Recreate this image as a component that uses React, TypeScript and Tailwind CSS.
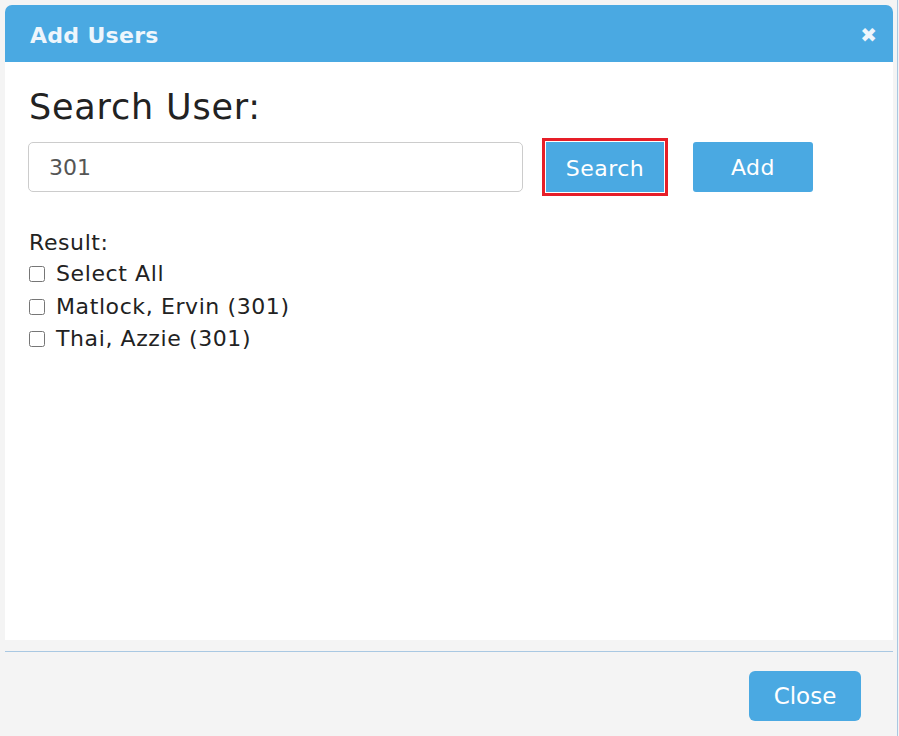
import React, { useState } from 'react';

const users = [
  { id: 'u1', name: 'Matlock, Ervin (301)' },
  { id: 'u2', name: 'Thai, Azzie (301)' },
];

export default function App() {
  const [query, setQuery] = useState('301');
  const [checked, setChecked] = useState<Record<string, boolean>>({});

  const allChecked = users.every((u) => checked[u.id]);

  const toggleAll = () => {
    const next: Record<string, boolean> = {};
    users.forEach((u) => (next[u.id] = !allChecked));
    setChecked(next);
  };

  return (
    <div
      className="w-[899px] h-[736px] bg-[#f4f4f4] flex overflow-hidden"
      style={{ fontFamily: '"DejaVu Sans", Verdana, sans-serif' }}
    >
      <div className="w-[888px] ml-[5px] mt-[5px] flex flex-col">
        {/* header */}
        <div className="h-[57px] bg-[#4aa9e2] rounded-t-[7px] flex items-center justify-between pl-[25px] pr-[16px]">
          <span className="text-[22px] font-bold text-[#eef6fc] tracking-[0.3px] mt-[3px]">Add Users</span>
          <span className="text-[#eef6fc] text-[20px] font-bold leading-none mt-[2px]">✖</span>
        </div>

        {/* body */}
        <div className="h-[578px] bg-white pl-[23px] pt-[24px]">
          <h2 className="text-[35px] leading-[42px] text-[#222] tracking-[0.8px] ml-[1px]">Search User:</h2>
          <div className="flex items-center mt-[10px]">
            <input
              value={query}
              onChange={(e) => setQuery(e.target.value)}
              className="w-[495px] h-[50px] border border-[#cccccc] rounded-[5px] pl-[20px] text-[22px] text-[#555] outline-none"
            />
            <div className="ml-[19px] border-[3px] border-[#e61e28] p-[1px]">
              <button className="w-[118px] h-[50px] pt-[2px] bg-[#4aa9e2] text-white text-[22px] tracking-[0.5px]">Search</button>
            </div>
            <button className="ml-[25px] w-[120px] h-[50px] bg-[#4aa9e2] text-white text-[22px] tracking-[0.5px] rounded-[3px]">
              Add
            </button>
          </div>

          <div className="mt-[32px] text-[22px] text-[#222] leading-[32.5px] tracking-[0.6px]">
            <div className="leading-[30px] ml-[1px]">Result:</div>
            <label className="flex items-center">
              <input type="checkbox" checked={allChecked} onChange={toggleAll} className="w-[16px] h-[16px] ml-[1px] mr-[11px]" />
              Select All
            </label>
            {users.map((u) => (
              <label key={u.id} className="flex items-center">
                <input
                  type="checkbox"
                  checked={!!checked[u.id]}
                  onChange={() => setChecked({ ...checked, [u.id]: !checked[u.id] })}
                  className="w-[16px] h-[16px] ml-[1px] mr-[11px]"
                />
                {u.name}
              </label>
            ))}
          </div>
        </div>

        {/* footer */}
        <div className="mt-[11px] border-t border-[#a9c8e2] flex justify-end pt-[19px] pr-[32px]">
          <button className="w-[112px] h-[50px] bg-[#4aa9e2] text-white text-[23px] rounded-[6px]">Close</button>
        </div>
      </div>
      <div className="ml-[4px] w-px h-full bg-[#a9c8e2]" />
    </div>
  );
}
